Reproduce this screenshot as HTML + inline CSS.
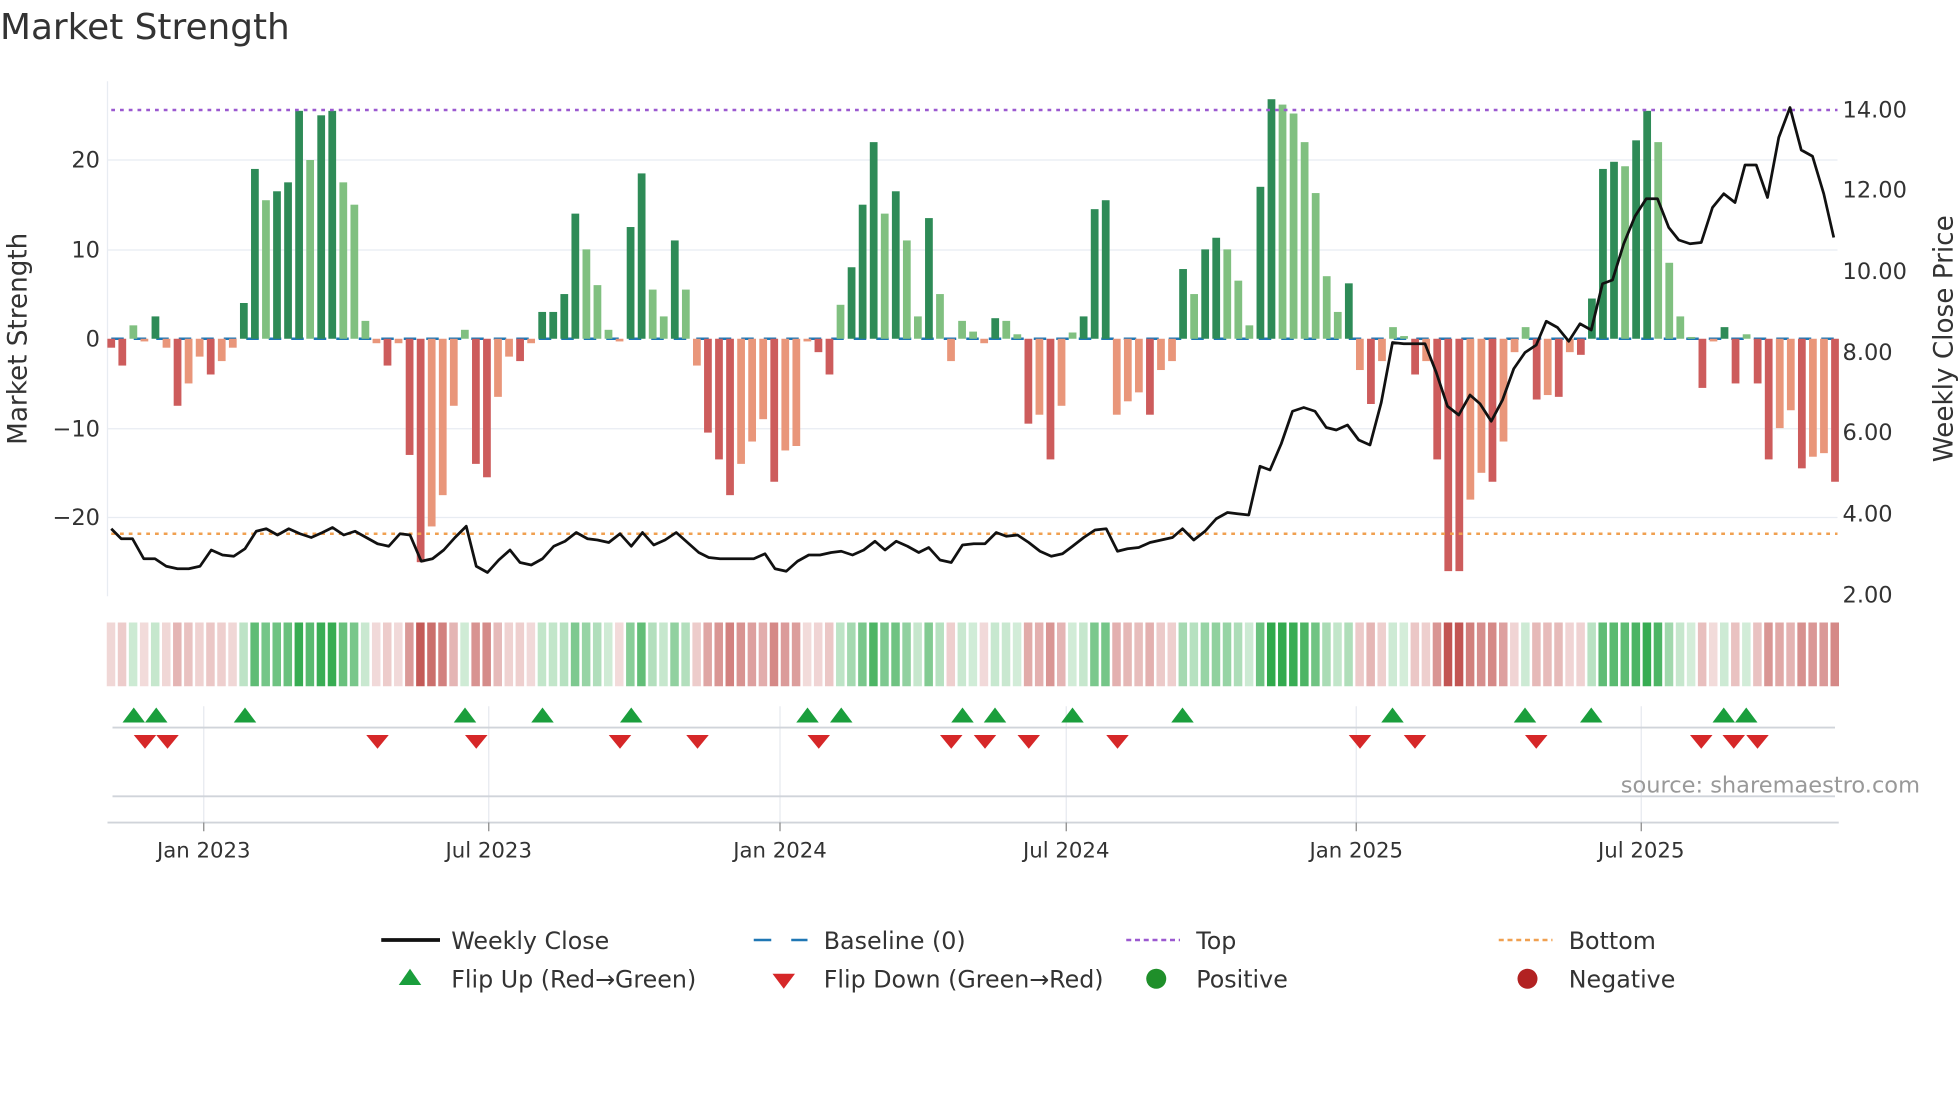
<!DOCTYPE html>
<html><head><meta charset="utf-8"><style>
html,body{margin:0;padding:0;background:#fff;width:1960px;height:1102px;overflow:hidden}
svg{display:block;font-family:"DejaVu Sans","Liberation Sans",sans-serif}
</style></head><body>
<svg id="s" width="1960" height="1102" viewBox="0 0 1568 881.6" xmlns="http://www.w3.org/2000/svg">
<rect width="1568" height="882" fill="#fff"/>
<text x="0" y="31" font-size="28.7" fill="#333">Market Strength</text>
<g stroke="#e8ecf2" stroke-width="1">
<line x1="86" x2="1470" y1="128" y2="128"/><line x1="86" x2="1470" y1="200" y2="200"/>
<line x1="86" x2="1470" y1="343" y2="343"/><line x1="86" x2="1470" y1="414" y2="414"/>
<line x1="86" x2="86" y1="65" y2="477"/>
</g>
<g stroke="#e6e9ef" stroke-width="1">
<line x1="163" x2="163" y1="565" y2="658"/><line x1="391" x2="391" y1="565" y2="658"/>
<line x1="624" x2="624" y1="565" y2="658"/><line x1="853" x2="853" y1="565" y2="658"/>
<line x1="1085" x2="1085" y1="565" y2="658"/><line x1="1313" x2="1313" y1="565" y2="658"/>
</g>
<line x1="90" x2="1468" y1="582" y2="582" stroke="#d0d4da" stroke-width="1.5"/>
<line x1="90" x2="1468" y1="637" y2="637" stroke="#d0d4da" stroke-width="1.5"/>
<line x1="86" x2="1471" y1="658" y2="658" stroke="#d0d4da" stroke-width="1.5"/>
<g stroke="#888" stroke-width="1">
<line x1="163" x2="163" y1="658" y2="665"/><line x1="391" x2="391" y1="658" y2="665"/>
<line x1="624" x2="624" y1="658" y2="665"/><line x1="853" x2="853" y1="658" y2="665"/>
<line x1="1085" x2="1085" y1="658" y2="665"/><line x1="1313" x2="1313" y1="658" y2="665"/>
</g>
<g font-size="17" fill="#333" text-anchor="middle">
<text x="163" y="686">Jan 2023</text><text x="391" y="686">Jul 2023</text>
<text x="624" y="686">Jan 2024</text><text x="853" y="686">Jul 2024</text>
<text x="1085" y="686">Jan 2025</text><text x="1313" y="686">Jul 2025</text>
</g>
<g font-size="18" fill="#333" text-anchor="end">
<text x="80" y="134">20</text><text x="80" y="206">10</text><text x="80" y="277">0</text>
<text x="80" y="349">−10</text><text x="80" y="420">−20</text>
</g>
<g font-size="18" fill="#333">
<text x="1474" y="94">14.00</text><text x="1474" y="158">12.00</text><text x="1474" y="223">10.00</text>
<text x="1474" y="288">8.00</text><text x="1474" y="352">6.00</text><text x="1474" y="417">4.00</text>
<text x="1474" y="482">2.00</text>
</g>
<text transform="translate(21,271) rotate(-90)" font-size="21" fill="#333" text-anchor="middle">Market Strength</text>
<text transform="translate(1562,271) rotate(-90)" font-size="21" fill="#333" text-anchor="middle">Weekly Close Price</text>
<g id="bars"></g>
<line x1="89" x2="1470" y1="88" y2="88" stroke="#9b59d0" stroke-width="2" stroke-dasharray="3,4"/>
<line x1="89" x2="1470" y1="427" y2="427" stroke="#f0a050" stroke-width="2" stroke-dasharray="3,4"/>
<g id="heat"></g>
<polyline id="price" fill="none" stroke="#111" stroke-width="2.2" stroke-linejoin="round"/>
<g id="flips"></g>
<text x="1536" y="634" font-size="18" fill="#999" text-anchor="end">source: sharemaestro.com</text>
<g font-size="19" fill="#333">
<line x1="305" x2="352" y1="752" y2="752" stroke="#111" stroke-width="3"/><text x="361" y="759">Weekly Close</text>
<line x1="603" x2="646" y1="752" y2="752" stroke="#1f77b4" stroke-width="2" stroke-dasharray="14,16"/><text x="659" y="759">Baseline (0)</text>
<line x1="901" x2="944" y1="752" y2="752" stroke="#9b59d0" stroke-width="2" stroke-dasharray="4,3"/><text x="957" y="759">Top</text>
<line x1="1199" x2="1242" y1="752" y2="752" stroke="#f0a050" stroke-width="2" stroke-dasharray="4,3"/><text x="1255" y="759">Bottom</text>
<polygon points="319,788 337,788 328,775" fill="#1a9e3c"/><text x="361" y="790">Flip Up (Red→Green)</text>
<polygon points="618,779 636,779 627,791" fill="#d62728"/><text x="659" y="790">Flip Down (Green→Red)</text>
<circle cx="925" cy="783" r="8" fill="#1f8f2a"/><text x="957" y="790">Positive</text>
<circle cx="1222" cy="783" r="8" fill="#b22222"/><text x="1255" y="790">Negative</text>
</g>
</svg>
<script>
var NS="http://www.w3.org/2000/svg";
function el(t,a,p){var e=document.createElementNS(NS,t);for(var k in a)e.setAttribute(k,a[k]);p.appendChild(e);return e;}
var v=[-1,-3,1.5,-0.3,2.5,-1,-7.5,-5,-2,-4,-2.5,-1,4,19,15.5,16.5,17.5,25.5,20,25,25.5,17.5,15,2,-0.5,-3,-0.5,-13,-25,-21,-17.5,-7.5,1,-14,-15.5,-6.5,-2,-2.5,-0.5,3,3,5,14,10,6,1,-0.3,12.5,18.5,5.5,2.5,11,5.5,-3,-10.5,-13.5,-17.5,-14,-11.5,-9,-16,-12.5,-12,-0.3,-1.5,-4,3.8,8,15,22,14,16.5,11,2.5,13.5,5,-2.5,2,0.8,-0.5,2.3,2,0.5,-9.5,-8.5,-13.5,-7.5,0.7,2.5,14.5,15.5,-8.5,-7,-6,-8.5,-3.5,-2.5,7.8,5,10,11.3,10,6.5,1.5,17,26.8,26.2,25.2,22,16.3,7,3,6.2,-3.5,-7.3,-2.5,1.3,0.3,-4,-2.5,-13.5,-26,-26,-18,-15,-16,-11.5,-1.5,1.3,-6.8,-6.3,-6.5,-1.5,-1.8,4.5,19,19.8,19.3,22.2,25.5,22,8.5,2.5,0.2,-5.5,-0.3,1.3,-5,0.5,-5,-13.5,-10,-8,-14.5,-13.2,-12.8,-16];
var bars=document.getElementById('bars'),heat=document.getElementById('heat');
el('line',{x1:89,x2:1470,y1:271,y2:271,stroke:'#1f77b4','stroke-width':2,'stroke-dasharray':'10,8'},bars);
var st=1379/156;
for(var i=0;i<v.length;i++){
 var x=89+st*i,val=v[i],p=i?v[i-1]:0,up=Math.abs(val)>=Math.abs(p);
 var h=val*7.15,c;
 if(val>=0)c=up?'#2e8b57':'#80c080';else c=up?'#cd5c5c':'#e9967a';
 el('rect',{x:x-3.1,y:val>=0?271-h:271,width:6.2,height:Math.max(Math.abs(h),1),fill:c},bars);
 var a=0.2+0.8*Math.min(Math.abs(val)/27,1);
 el('rect',{x:x-3.6,y:498,width:6.8,height:51,fill:val>=0?'#2ea84a':'#c0504d','fill-opacity':a},heat);
}
var pts="89,423 97,431 106,431 115,447 124,447 133,453 142,455 151,455 160,453 169,440 178,444 187,445 196,439 205,425 213,423 222,428 231,423 240,427 249,430 258,426 266,422 275,428 284,425 293,430 302,435 311,437 320,427 328,428 337,449 346,447 355,440 364,430 373,421 381,453 390,458 399,448 408,440 416,450 425,452 434,447 443,437 452,433 461,426 470,431 478,432 487,434 496,427 505,437 514,426 523,436 532,432 541,426 550,434 559,442 567,446 576,447 585,447 594,447 603,447 612,443 620,455 629,457 638,449 647,444 656,444 665,442 673,441 682,444 691,440 700,433 708,440 717,433 726,437 735,442 743,438 752,448 761,450 770,436 779,435 788,435 797,426 805,429 814,428 823,434 832,441 841,445 850,443 858,437 867,430 876,424 885,423 894,441 902,439 911,438 920,434 929,432 938,430 946,423 955,432 964,425 973,415 982,410 990,411 999,412 1008,373 1016,376 1025,355 1034,329 1043,326 1052,329 1061,342 1069,344 1078,340 1087,352 1096,356 1105,322 1114,274 1123,275 1131,275 1140,275 1149,298 1158,325 1167,332 1176,316 1184,323 1193,337 1202,320 1211,295 1220,282 1229,276 1237,257 1246,262 1255,273 1264,259 1273,264 1282,227 1290,224 1299,195 1308,173 1317,159 1326,159 1335,182 1343,192 1352,195 1361,194 1370,166 1379,155 1388,162 1396,132 1405,132 1414,158 1423,110 1432,86 1441,120 1450,125 1459,155 1467,190";
document.getElementById('price').setAttribute('points',pts);
var f=document.getElementById('flips');
[107,125,196,372,434,505,646,673,770,796,858,946,1114,1220,1273,1379,1397].forEach(function(x){el('polygon',{points:(x-9)+',578 '+(x+9)+',578 '+x+',566',fill:'#1a9e3c'},f);});
[116,134,302,381,496,558,655,761,788,823,894,1088,1132,1229,1361,1387,1406].forEach(function(x){el('polygon',{points:(x-9)+',588 '+(x+9)+',588 '+x+',599',fill:'#d62728'},f);});
</script>
</body></html>
